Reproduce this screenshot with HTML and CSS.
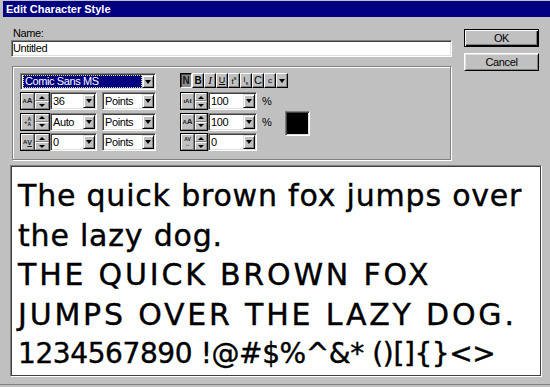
FILE: index.html
```html
<!DOCTYPE html>
<html>
<head>
<meta charset="utf-8">
<title>Edit Character Style</title>
<link rel="stylesheet" href="styles.css">
</head>
<body>
<div class="window">
  <div class="titlebar">Edit Character Style</div>
  <div class="main">
    <div class="left">
      <label class="name-label">Name:</label>
      <div class="name-input">Untitled</div>
      <div class="group">
        <div class="gleft">
          <div class="combo font-combo"><div class="combo-field"><span class="sel">Comic Sans MS</span></div><div class="arrow"></div></div>
          <div class="rows">
            <div class="row">
              <div class="spin"><div class="ico"><span class="sm">A</span><span class="lg">A</span></div><div class="updown"><div class="ud up"></div><div class="ud down"></div></div></div>
              <div class="combo num"><div class="combo-field">36</div><div class="arrow"></div></div>
              <div class="combo unit"><div class="combo-field">Points</div><div class="arrow"></div></div>
            </div>
            <div class="row">
              <div class="spin"><div class="ico"><span class="sm">+</span><span class="stack">A<br>A</span></div><div class="updown"><div class="ud up"></div><div class="ud down"></div></div></div>
              <div class="combo num"><div class="combo-field">Auto</div><div class="arrow"></div></div>
              <div class="combo unit"><div class="combo-field">Points</div><div class="arrow"></div></div>
            </div>
            <div class="row">
              <div class="spin"><div class="ico"><span class="sm">A</span><span class="ul">V</span></div><div class="updown"><div class="ud up"></div><div class="ud down"></div></div></div>
              <div class="combo num"><div class="combo-field">0</div><div class="arrow"></div></div>
              <div class="combo unit"><div class="combo-field">Points</div><div class="arrow"></div></div>
            </div>
          </div>
        </div>
        <div class="gright">
          <div class="styles">
            <div class="sbtn pressed"><b>N</b></div>
            <div class="sbtn"><b>B</b></div>
            <div class="sbtn"><span class="it">I</span></div>
            <div class="sbtn"><span class="un">U</span></div>
            <div class="sbtn"><span class="ss">t<sup>s</sup></span></div>
            <div class="sbtn"><span class="ss">l<sub>s</sub></span></div>
            <div class="sbtn"><span class="cap">C</span></div>
            <div class="sbtn"><span class="smc">c</span></div>
            <div class="sbtn drop"></div>
          </div>
          <div class="rbox">
            <div class="rrows">
              <div class="rrow">
                <div class="spin"><div class="ico wide"><span class="sm">ıA</span><span class="lg">ı</span></div><div class="updown"><div class="ud up"></div><div class="ud down"></div></div></div>
                <div class="combo num"><div class="combo-field">100</div><div class="arrow"></div></div>
                <span class="pct">%</span>
              </div>
              <div class="rrow">
                <div class="spin"><div class="ico wide"><span class="sm">A</span><span class="lg">A</span></div><div class="updown"><div class="ud up"></div><div class="ud down"></div></div></div>
                <div class="combo num"><div class="combo-field">100</div><div class="arrow"></div></div>
                <span class="pct">%</span>
              </div>
              <div class="rrow">
                <div class="spin"><div class="ico wide"><span class="stack">AV<br>↔</span></div><div class="updown"><div class="ud up"></div><div class="ud down"></div></div></div>
                <div class="combo num"><div class="combo-field">0</div><div class="arrow"></div></div>
              </div>
            </div>
            <div class="swatch"></div>
          </div>
        </div>
      </div>
    </div>
    <div class="buttons">
      <div class="btn default">OK</div>
      <div class="btn">Cancel</div>
    </div>
  </div>
  <div class="preview">
    <div class="line">The quick brown fox jumps over</div>
    <div class="line">the lazy dog.</div>
    <div class="line caps">THE QUICK BROWN FOX</div>
    <div class="line caps">JUMPS OVER THE LAZY DOG.</div>
    <div class="line syms">1234567890 !@#$%^&amp;* ()[]{}&lt;&gt;</div>
  </div>
</div>
</body>
</html>
```

FILE: styles.css
```css
* { box-sizing: border-box; }
html, body { margin: 0; padding: 0; }
body {
  background: #c0c0c0;
  font-family: "Liberation Sans", Arial, sans-serif;
  font-size: 11px;
  letter-spacing: -0.4px;
  color: #000;
  width: 550px;
  height: 387px;
  overflow: hidden;
}
.window {
  width: 550px;
  height: 385px;
  padding: 1px 0 0 3px;
  border-bottom: 1px solid #808080;
}
.titlebar {
  height: 16px;
  background: #000080;
  color: #fff;
  font-weight: bold;
  letter-spacing: 0;
  line-height: 16px;
  padding-left: 3px;
}
.main {
  display: flex;
  padding: 10px 0 0 8px;
}
.left { width: 441px; }
.name-label {
  display: block;
  height: 13px;
  line-height: 13px;
  padding-left: 2px;
}
.name-input {
  height: 17px;
  line-height: 15px;
  padding-left: 1px;
  background: #fff;
  border: 1px solid;
  border-color: #808080 #fff #fff #808080;
  box-shadow: inset 1px 1px 0 #404040, inset -1px -1px 0 #dfdfdf;
}
.group {
  margin: 9px 0 0 1px;
  width: 439px;
  height: 94px;
  border: 1px solid #808080;
  box-shadow: inset 1px 1px 0 #fff, 1px 1px 0 #fff;
  padding: 6px 0 0 7px;
  display: flex;
}
.gleft {
  width: 136px;
  display: flex;
  flex-direction: column;
}
.combo {
  display: flex;
  background: #fff;
  border: 1px solid;
  border-color: #808080 #fff #fff #808080;
  box-shadow: inset 1px 1px 0 #404040, inset -1px -1px 0 #dfdfdf;
  padding: 1px;
}
.combo-field {
  flex: 1;
  padding-left: 1px;
  line-height: 14px;
  white-space: nowrap;
  overflow: hidden;
}
.arrow {
  width: 12px;
  background: #c0c0c0;
  border: 1px solid;
  border-color: #dfdfdf #000 #000 #dfdfdf;
  box-shadow: inset 1px 1px 0 #fff, inset -1px -1px 0 #808080;
  display: flex;
  align-items: center;
  justify-content: center;
}
.arrow::after, .drop::after {
  content: "";
  border-left: 3.5px solid transparent;
  border-right: 3.5px solid transparent;
  border-top: 4px solid #000;
}
.font-combo {
  height: 17px;
  margin-bottom: 2px;
}
.font-combo .combo-field { line-height: 11px; }
.sel {
  display: block;
  height: 13px;
  background: #000080;
  color: #fff;
  border: 1px dotted #d8d890;
  padding-left: 1px;
  line-height: 11px;
}
.rows, .rrows {
  display: flex;
  flex-direction: column;
  gap: 2.5px;
}
.row, .rrow {
  display: flex;
  height: 18px;
  align-items: stretch;
}
.spin {
  display: flex;
  width: 30px;
  border: 1px solid #000;
  background: #c0c0c0;
}
.ico {
  width: 13px;
  border: 1px solid;
  border-color: #fff #808080 #808080 #fff;
  display: flex;
  align-items: center;
  justify-content: center;
  font-size: 7px;
  font-weight: bold;
  letter-spacing: 0;
  line-height: 1;
  color: #202020;
  overflow: hidden;
}
.ico .sm { font-size: 6px; }
.ico .lg { font-size: 8px; }
.ico .stack { font-size: 5px; line-height: 5px; text-align: center; }
.ico .ul { text-decoration: underline; }
.ico.wide { width: 13px; }
.updown {
  flex: 1;
  display: flex;
  flex-direction: column;
  border-left: 1px solid #404040;
}
.ud {
  flex: 1;
  border: 1px solid;
  border-color: #fff #808080 #808080 #fff;
  display: flex;
  align-items: center;
  justify-content: center;
}
.up::after {
  content: "";
  border-left: 3px solid transparent;
  border-right: 3px solid transparent;
  border-bottom: 3px solid #000;
}
.down::after {
  content: "";
  border-left: 3px solid transparent;
  border-right: 3px solid transparent;
  border-top: 3px solid #000;
}
.num { width: 47px; }
.unit { width: 54px; margin-left: 5px; }
.gright { margin-left: 24px; }
.styles {
  display: flex;
  height: 15px;
  margin-bottom: 4px;
}
.sbtn {
  width: 12px;
  height: 15px;
  background: #c0c0c0;
  border: 1px solid;
  border-color: #fff #000 #000 #fff;
  box-shadow: inset -1px -1px 0 #808080;
  display: flex;
  align-items: center;
  justify-content: center;
  font-size: 10px;
  letter-spacing: 0;
  line-height: 1;
}
.sbtn.pressed {
  background: #8a8a8a;
  border-color: #000 #fff #fff #000;
  box-shadow: inset 1px 1px 0 #404040;
  color: #1a1a1a;
}
.sbtn .it { font-family: "Liberation Serif", serif; font-style: italic; font-size: 11px; }
.sbtn .un { text-decoration: underline; font-size: 9px; }
.sbtn .ss { font-size: 8px; }
.sbtn sup, .sbtn sub { font-size: 6px; }
.sbtn .cap { font-size: 11px; }
.sbtn .smc { font-size: 8px; }
.rbox { display: flex; }
.rrow .spin { width: 28px; }
.rrow .num { width: 49px; }
.pct {
  width: 10px;
  margin-left: 5px;
  line-height: 18px;
  font-size: 11px;
}
.swatch {
  width: 25px;
  height: 25px;
  margin: 19px 0 0 13px;
  background: #000;
  border: 1px solid;
  border-color: #808080 #fff #fff #808080;
  box-shadow: inset 1px 1px 0 #404040, inset -1px -1px 0 #dfdfdf;
}
.buttons {
  margin-left: 12px;
  width: 75px;
  padding-top: 2px;
  display: flex;
  flex-direction: column;
  gap: 6px;
}
.btn {
  height: 18px;
  background: #c0c0c0;
  border: 1px solid;
  border-color: #fff #000 #000 #fff;
  box-shadow: inset 1px 1px 0 #dfdfdf, inset -1px -1px 0 #808080;
  text-align: center;
  line-height: 16px;
}
.btn.default {
  border-color: #000;
  box-shadow: inset 1px 1px 0 #fff, inset -1px -1px 0 #000, inset -2px -2px 0 #808080;
}
.preview {
  margin: 5px 0 0 7px;
  width: 532px;
  height: 212px;
  background: #fff;
  border: 1px solid;
  border-color: #808080 #fff #fff #808080;
  box-shadow: inset 0 0 0 1px #404040;
  padding: 10px 0 0 7px;
  font-family: "DejaVu Sans", sans-serif;
  font-size: 30px;
  letter-spacing: 0.8px;
  line-height: 39.5px;
  white-space: nowrap;
  overflow: hidden;
  color: #000;
  -webkit-text-stroke: 0.4px #000;
}
.line { height: 39.5px; }
.line.caps { letter-spacing: 2.8px; }
.line.syms { font-size: 28px; letter-spacing: -0.4px; }
```
